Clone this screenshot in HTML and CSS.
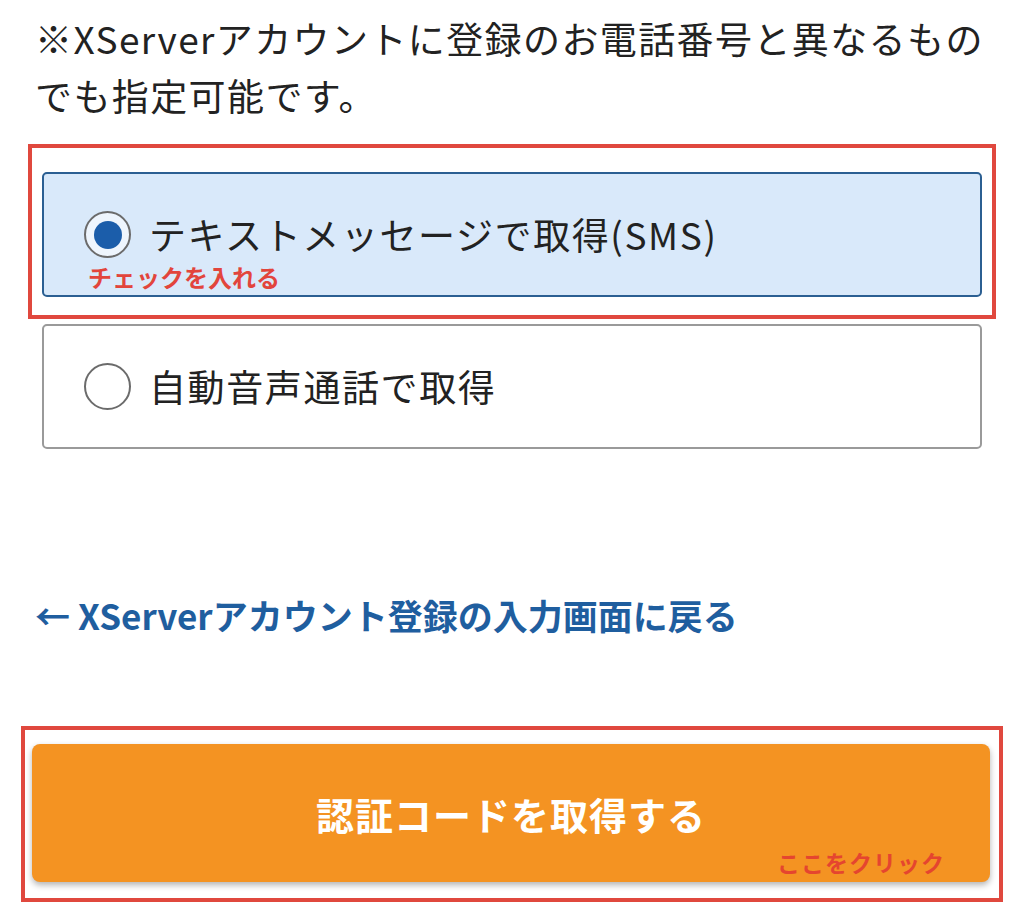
FILE: index.html
```html
<!DOCTYPE html>
<html lang="ja">
<head>
  <meta charset="UTF-8">
  <meta name="viewport" content="width=device-width, initial-scale=1.0">
  <title>認証コードの取得</title>
  <link rel="stylesheet" href="styles.css">
</head>
<body>
  <p class="note">※XServerアカウントに登録のお電話番号と異なるものでも指定可能です。</p>

  <div class="mark mark-options">
    <label class="option selected">
      <span class="radio"></span>
      <span class="option-text">テキストメッセージで取得(SMS)</span>
      <span class="memo memo-check">チェックを入れる</span>
    </label>
  </div>

  <label class="option option-plain">
    <span class="radio"></span>
    <span class="option-text">自動音声通話で取得</span>
  </label>

  <a class="back-link" href="#">← XServerアカウント登録の入力画面に戻る</a>

  <div class="mark mark-button">
    <button type="button" class="submit">
      認証コードを取得する
      <span class="memo memo-click">ここをクリック</span>
    </button>
  </div>
</body>
</html>
```

FILE: styles.css
```css
body {
  margin: 0;
  background-color: #fff;
  font-family: "Noto Sans CJK JP", "Noto Sans", sans-serif;
  color: #222;
}

.note {
  margin: 10px 0 0 35px;
  width: 960px;
  font-size: 37px;
  line-height: 57px;
  letter-spacing: 1.4px;
}

/* red annotation frames */
.mark {
  box-sizing: border-box;
  border: 4px solid #e0483e;
}

.mark-options {
  width: 968px;
  margin: 20px 0 0 28px;
  padding: 24px 10px 18px 10px;
}

.option {
  position: relative;
  box-sizing: border-box;
  display: flex;
  align-items: center;
  gap: 18px;
  width: 940px;
  height: 125px;
  padding-left: 40px;
  border: 2px solid #9a9a9a;
  border-radius: 5px;
  background-color: #fff;
}

.option.selected {
  background-color: #d9e9fa;
  border-color: #2b5f92;
}

.option-plain {
  margin: 5px 0 0 42px;
}

.radio {
  box-sizing: border-box;
  flex: none;
  width: 47px;
  height: 47px;
  border: 2.5px solid #6b6b6b;
  border-radius: 50%;
  background-color: #fff;
  display: flex;
  align-items: center;
  justify-content: center;
}

.selected .radio {
  background-color: #eef5fd;
}

.selected .radio::after {
  content: "";
  width: 28px;
  height: 28px;
  border-radius: 50%;
  background-color: #1b5daa;
}

.option-text {
  font-size: 37px;
  line-height: 1;
  letter-spacing: 1.6px;
  color: #222;
}

.memo {
  position: absolute;
  font-weight: bold;
  line-height: 1;
  color: #e2453c;
}

.memo-check {
  left: 44px;
  top: 91px;
  font-size: 24px;
}

.back-link {
  display: block;
  margin: 141px 0 0 35px;
  font-size: 35px;
  line-height: 50px;
  font-weight: bold;
  color: #1f5e9f;
  text-decoration: none;
}

.mark-button {
  width: 982px;
  margin: 86px 0 0 21px;
  padding: 14px 9px 16px 7px;
}

.submit {
  position: relative;
  display: block;
  width: 958px;
  height: 138px;
  border: none;
  border-radius: 8px;
  background-color: #f49322;
  box-shadow: 0 3px 6px rgba(0, 0, 0, 0.3);
  font-family: inherit;
  font-size: 38px;
  font-weight: bold;
  letter-spacing: 1px;
  color: #fff;
  cursor: pointer;
}

.memo-click {
  right: 45px;
  top: 107px;
  font-size: 23px;
  letter-spacing: 1px;
  color: #e5452f;
}
```
